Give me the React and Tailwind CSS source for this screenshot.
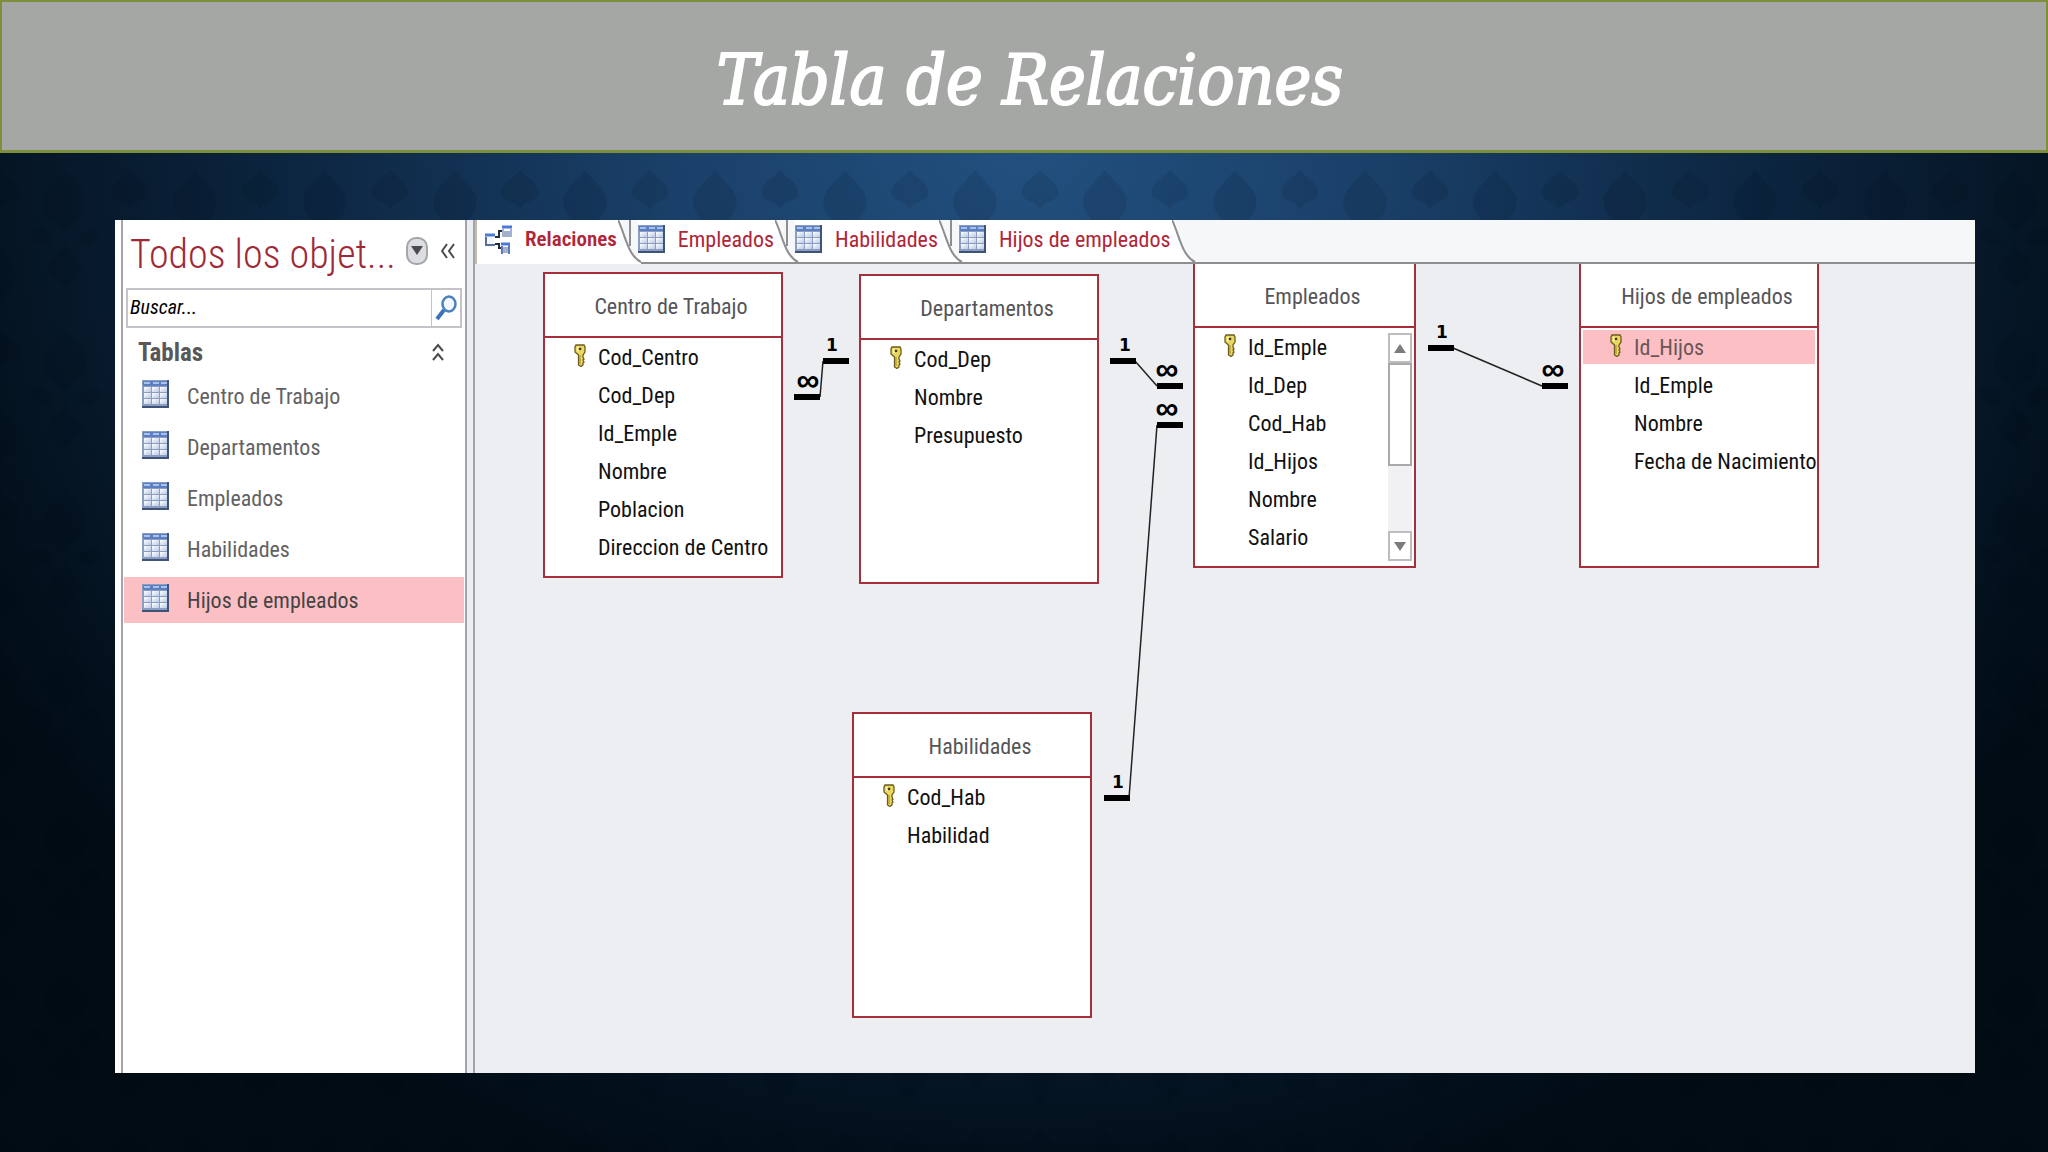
import React, { useState } from 'react';

const tablas = ['Centro de Trabajo', 'Departamentos', 'Empleados', 'Habilidades', 'Hijos de empleados'];

const pestanas = ['Relaciones', 'Empleados', 'Habilidades', 'Hijos de empleados'];

const entidades = [
    {
        nombre: 'Centro de Trabajo',
        pos: 'left-[68px] top-[8px] w-[240px] h-[306px]',
        campos: ['Cod_Centro', 'Cod_Dep', 'Id_Emple', 'Nombre', 'Poblacion', 'Direccion de Centro'],
    },
    {
        nombre: 'Departamentos',
        pos: 'left-[384px] top-[10px] w-[240px] h-[310px]',
        campos: ['Cod_Dep', 'Nombre', 'Presupuesto'],
    },
    {
        nombre: 'Empleados',
        pos: 'left-[718px] -top-[2px] w-[223px] h-[306px]',
        campos: ['Id_Emple', 'Id_Dep', 'Cod_Hab', 'Id_Hijos', 'Nombre', 'Salario'],
        scroll: true,
    },
    {
        nombre: 'Hijos de empleados',
        pos: 'left-[1104px] -top-[2px] w-[240px] h-[306px]',
        campos: ['Id_Hijos', 'Id_Emple', 'Nombre', 'Fecha de Nacimiento'],
        activo: 'Id_Hijos',
    },
    {
        nombre: 'Habilidades',
        pos: 'left-[377px] top-[448px] w-[240px] h-[306px]',
        campos: ['Cod_Hab', 'Habilidad'],
    },
];

// uno / muchos: left edge and top of each thick bar, then the centre of its symbol
const relaciones = [
    { uno: [348, 94, 357], muchos: [319, 130, 333], linea: 'M348 97 L345 133' },
    { uno: [635, 94, 650], muchos: [682, 119, 692], linea: 'M660 97 L682 122' },
    { uno: [629, 531, 643], muchos: [682, 158, 692], linea: 'M682 161 L654 534' },
    { uno: [953, 81, 967], muchos: [1067, 119, 1078], linea: 'M978 84 L1067 122' },
];

const TableIcon = ({ className }) => (
    <svg viewBox="0 0 27 28" className={`w-[27px] h-[28px] shrink-0 ${className || ''}`}>
        <defs>
            <linearGradient id="celdas" x1="0" y1="0" x2="1" y2="1">
                <stop offset="0" stopColor="#ffffff" />
                <stop offset="1" stopColor="#b9c9e6" />
            </linearGradient>
        </defs>
        <rect width="27" height="28" fill="#3f5379" />
        <rect width="25" height="26" fill="#8b9dc0" />
        <rect x="1" y="1" width="24" height="5" fill="#5b7fc0" />
        <path d="M2 3h6M11 3h6M19 3h6" stroke="#a9c2ec" strokeWidth="2" />
        {[7, 13, 19].map((y) => (
            <g key={y} fill="url(#celdas)">
                <rect x="2" y={y} width="7" height="5" />
                <rect x="10" y={y} width="7" height="5" />
                <rect x="18" y={y} width="7" height="5" />
            </g>
        ))}
    </svg>
);

const RelationsIcon = () => (
    <svg viewBox="0 0 27 30" className="w-[27px] h-[30px] shrink-0" fill="none">
        <path d="M0 11h9v9H0z" fill="#f4f7fd" />
        <path d="M0 10h10" stroke="#4a7ad8" strokeWidth="3" />
        <path d="M1 12v8M0 20h10" stroke="#5b6f96" strokeWidth="2" />
        <path d="M10 12h4V6h3M10 19h4v4h2" stroke="#222b3c" strokeWidth="2" />
        <path d="M17 2h10" stroke="#4a7ad8" strokeWidth="3" />
        <path d="M18 3v9M26 3v9" stroke="#9fb3dc" strokeWidth="2" />
        <rect x="19" y="6" width="6" height="6" fill="#a6b0c6" />
        <path d="M16 19h9" stroke="#4a7ad8" strokeWidth="3" />
        <path d="M24 19v10M17 21v8" stroke="#5b7cc4" strokeWidth="2" />
        <rect x="18" y="22" width="5" height="6" fill="#a6b0c6" />
    </svg>
);

const KeyIcon = () => (
    <svg viewBox="0 0 12 23" className="w-[12px] h-[23px] shrink-0 mb-1">
        <path
            d="M2 1h8l1 2v5l-2 3v2l1 2-1 1 1 2-1 1v2l-2 1.500-2.500-1.500V11L1 8V3z"
            fill="#ecd95c"
            stroke="#6b5b1e"
            strokeWidth="1.300"
        />
        <path d="M3 3h4v4H3z" fill="#fdf6b4" />
        <circle cx="6" cy="5" r="1.400" fill="#4a3d10" />
        <path d="M6 11v9" stroke="#a38a25" strokeWidth="1" />
    </svg>
);

const TabEdge = ({ first, last }) => (
    <svg viewBox="0 0 24 44" className="w-[24px] h-[44px] shrink-0 -mr-1 relative self-start" fill="none">
        <path d={first ? 'M0 0 C7 14 10 36 23 42 V44 H0z' : 'M0 0 C7 14 10 36 23 42 H0z'} fill="#fff" />
        {!last && <path d="M12 0v26" stroke="#8e8e90" strokeWidth="2" />}
        <path d="M0 0 C7 14 10 36 23 42" stroke="#8e8e90" strokeWidth="2" />
    </svg>
);

const Sidebar = ({ activa, onSelect }) => (
    <aside className="w-[352px] shrink-0 pl-[6px] bg-white flex">
        <div className="flex-1 min-w-0 border-x-2 border-[#a2a4a8] px-px">
            <div className="h-[66px] flex items-center pl-[6px] pr-[9px]">
                <h2 className="flex-1 min-w-0 pt-1 text-[40px] leading-none font-light text-[#9f2936] whitespace-nowrap">Todos los objet...</h2>
                <button aria-label="Categorías" className="w-[22px] h-[28px] shrink-0 mr-[13px] mb-1 rounded-[10px] border-2 border-[#a5a6aa] bg-[#dcdde1] flex items-center justify-center">
                    <svg viewBox="0 0 12 10" className="w-[12px] h-[10px]"><path d="M0 0h12L6 9z" fill="#4b4b4f" /></svg>
                </button>
                <button aria-label="Contraer panel" className="shrink-0 mb-1">
                    <svg viewBox="0 0 14 16" className="w-[14px] h-[16px]" fill="none" stroke="#4b4b4f" strokeWidth="2">
                        <path d="M6 1L1 8l5 7M13 1L8 8l5 7" />
                    </svg>
                </button>
            </div>
            <div className="mt-[2px] mx-[2px] h-[40px] flex border-2 border-[#c4c4c8]">
                <input
                    type="text"
                    aria-label="Buscar"
                    placeholder="Buscar..."
                    className="flex-1 min-w-0 px-[2px] pb-[2px] text-[20px] italic outline-none placeholder:text-black"
                />
                <button aria-label="Iniciar búsqueda" className="w-[29px] border-l border-[#c4c4c8] flex items-center justify-center">
                    <svg viewBox="0 0 22 26" className="w-[22px] h-[26px]" fill="none">
                        <path d="M2 24l7-9" stroke="#3d74b8" strokeWidth="4" />
                        <ellipse cx="14" cy="9" rx="6.500" ry="7.500" fill="#f3f8fd" stroke="#4a80bf" strokeWidth="2.500" />
                    </svg>
                </button>
            </div>
            <div className="h-[45px] flex items-center justify-between pt-[3px] pl-[14px] pr-[20px]">
                <h3 className="text-[25px] leading-none font-bold text-[#58585a]">Tablas</h3>
                <button aria-label="Contraer grupo">
                    <svg viewBox="0 0 12 18" className="w-[12px] h-[18px]" fill="none" stroke="#4b4b4f" strokeWidth="2">
                        <path d="M1 8l5-6 5 6M1 17l5-6 5 6" />
                    </svg>
                </button>
            </div>
            <ul className="flex flex-col gap-[5px]">
                {tablas.map((tabla) => (
                    <li key={tabla}>
                        <a
                            href="#"
                            onClick={() => onSelect(tabla)}
                            className={`h-[46px] flex items-center gap-[18px] pl-[18px] text-[22px] ${
                                activa === tabla ? 'bg-[#fcc0c4] text-[#444446]' : 'text-[#626264]'
                            }`}
                        >
                            <TableIcon className="mb-1" />
                            {tabla}
                        </a>
                    </li>
                ))}
            </ul>
        </div>
    </aside>
);

const TabBar = () => (
    <div className="h-[44px] flex border-b-2 border-[#8e8e90] bg-[#f6f7f8]">
        {pestanas.map((pestana, i) => (
            <div key={pestana} className={`flex ${i === 0 ? 'h-[44px] border-l-2 border-[#c9b9a8]' : 'h-[42px]'}`}>
                <button
                    className={`flex items-center gap-[13px] bg-white pr-px pb-[4px] text-[#b02538] whitespace-nowrap ${
                        i === 0 ? 'pl-[8px] text-[21px] font-semibold' : 'text-[22px]'
                    }`}
                >
                    {i === 0 ? <RelationsIcon /> : <TableIcon />}
                    {pestana}
                </button>
                <TabEdge first={i === 0} last={i === pestanas.length - 1} />
            </div>
        ))}
    </div>
);

const ScrollBar = () => (
    <div className="w-[24px] shrink-0 my-[5px] mr-[2px] bg-[#f1f0f2] flex flex-col">
        <button aria-label="Subir" className="h-[30px] bg-white border-2 border-[#bdbdbf] flex items-center justify-center">
            <svg viewBox="0 0 12 9" className="w-[12px] h-[9px]"><path d="M0 9h12L6 0z" fill="#7d7d80" /></svg>
        </button>
        <div className="h-[103px] bg-white border-2 border-[#a9a9ac]"></div>
        <button aria-label="Bajar" className="mt-auto h-[30px] bg-white border-2 border-[#bdbdbf] flex items-center justify-center">
            <svg viewBox="0 0 12 9" className="w-[12px] h-[9px]"><path d="M0 0h12L6 9z" fill="#7d7d80" /></svg>
        </button>
    </div>
);

const Entity = ({ nombre, pos, campos, activo, scroll }) => (
    <section className={`absolute flex flex-col bg-white border-2 border-[#a5303c] ${pos}`}>
        <h3 className="h-[64px] shrink-0 flex items-center justify-center pl-4 pt-[2px] border-b-2 border-[#a5303c] text-[22px] text-[#555558]">
            {nombre}
        </h3>
        <div className="flex-1 flex">
            <ul className="flex-1 min-w-0">
                {campos.map((campo, i) => (
                    <li
                        key={campo}
                        className={`h-[34px] mx-[2px] mt-[2px] mb-[4px] pt-px flex items-center text-[22px] whitespace-nowrap ${
                            activo === campo ? 'bg-[#fcc0c4] text-[#6a5558]' : 'text-[#111]'
                        }`}
                    >
                        <span className="w-[51px] pl-[27px] shrink-0">{i === 0 && <KeyIcon />}</span>
                        {campo}
                    </li>
                ))}
            </ul>
            {scroll && <ScrollBar />}
        </div>
    </section>
);

const Relations = () => (
    <svg className="absolute inset-0 w-full h-full pointer-events-none font-['DejaVu_Sans',sans-serif] font-bold">
        {relaciones.map(({ uno, muchos, linea }) => (
            <g key={linea}>
                <path d={linea} fill="none" stroke="#222" strokeWidth="1.500" />
                <rect x={uno[0]} y={uno[1]} width="26" height="6" />
                <rect x={muchos[0]} y={muchos[1]} width="26" height="6" />
                <text x={uno[2]} y={uno[1] - 7} textAnchor="middle" className="text-[17px]">1</text>
                <text x={muchos[2]} y={muchos[1] - 3} textAnchor="middle" className="text-[32px] font-['Liberation_Sans',sans-serif]">∞</text>
            </g>
        ))}
    </svg>
);

const Backdrop = () => (
    <svg className="absolute inset-0 w-full h-full opacity-10">
        <defs>
            <pattern id="damasco" width="130" height="160" patternUnits="userSpaceOnUse">
                <g fill="#000814">
                    <path d="M65 10c14 18 26 22 20 40-4 10-12 12-20 22-8-10-16-12-20-22-6-18 6-22 20-40z" />
                    <path d="M30 70c12-6 24 4 22 14-10 4-22 0-22-14zM100 70c-12-6-24 4-22 14 10 4 22 0 22-14z" />
                    <path d="M65 84c8 14 18 14 16 28-6 10-12 8-16 18-4-10-10-8-16-18-2-14 8-14 16-28z" />
                    <path d="M0 90c10 14 20 16 16 32-4 10-10 10-16 20zM130 90c-10 14-20 16-16 32 4 10 10 10 16 20z" />
                    <path d="M0 10c8 10 20 12 18 26-8 8-14 4-18 14zM130 10c-8 10-20 12-18 26 8 8 14 4 18 14z" />
                </g>
            </pattern>
        </defs>
        <rect width="100%" height="100%" fill="url(#damasco)" />
    </svg>
);

export default function App() {
    const [activa, setActiva] = useState('Hijos de empleados');

    return (
        <div className="relative min-h-screen flex flex-col font-['Roboto_Condensed','Open_Sans',sans-serif] bg-[radial-gradient(ellipse_58%_95%_at_50%_12%,#22507f_0%,#1a4069_30%,#0c2540_62%,#04121f_90%,#010c15_100%)]">
            <Backdrop />
            <header className="relative h-[153px] flex items-center justify-center border-2 border-b-[3px] border-[#7c8f3b] bg-[#a5a7a4] pl-[12px] pt-2">
                <h1 className="text-[69px] leading-none italic text-white font-['DejaVu_Serif_Condensed','DejaVu_Serif',serif] [-webkit-text-stroke:2px_white]">
                    Tabla de Relaciones
                </h1>
            </header>
            <main className="relative flex-1 flex mt-[67px] mb-[79px] ml-[115px] mr-[73px]">
                <Sidebar activa={activa} onSelect={setActiva} />
                <div className="flex-1 min-w-0 ml-[6px] flex flex-col border-l-2 border-[#a2a4a8] bg-[#eceef2] shadow-[-6px_0_0_#ebedf2]">
                    <TabBar />
                    <div className="relative flex-1 overflow-hidden">
                        {entidades.map((entidad) => (
                            <Entity key={entidad.nombre} {...entidad} />
                        ))}
                        <Relations />
                    </div>
                </div>
            </main>
        </div>
    );
}
